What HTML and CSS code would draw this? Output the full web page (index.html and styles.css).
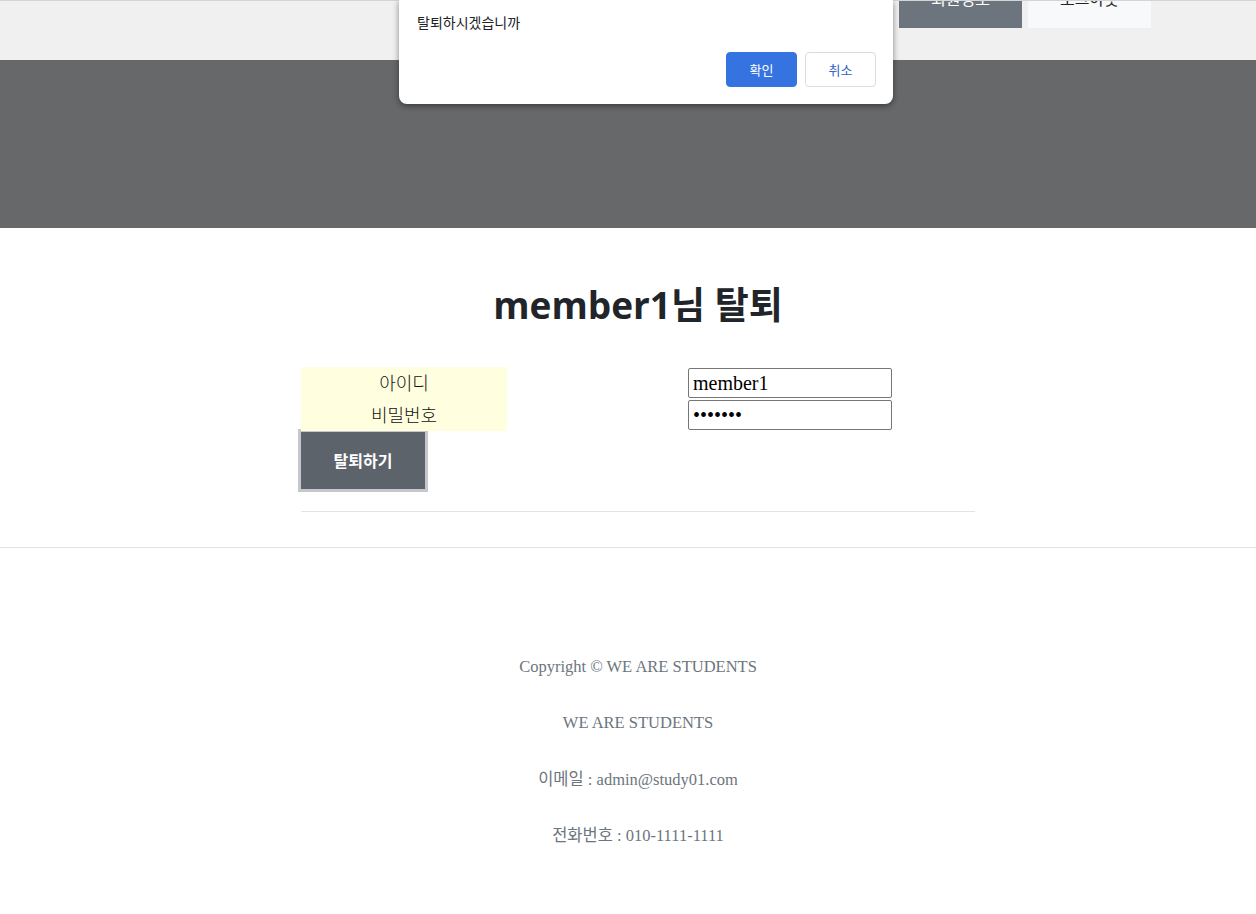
FILE: index.html
```html
<!DOCTYPE html>
<html lang="ko">
<head>
<meta charset="utf-8">
<title>회원 탈퇴</title>
<link rel="stylesheet" href="styles.css">
</head>
<body>
<header class="topbar">
  <nav class="nav">
    <a class="nav-btn nav-dark">회원정보</a>
    <a class="nav-btn nav-light">로그아웃</a>
  </nav>
</header>
<section class="hero"></section>
<main class="content">
  <h1 class="title">member1님 탈퇴</h1>
  <form class="form">
    <div class="grid">
      <div class="label">아이디</div>
      <div class="field"><input class="input" type="text" value="member1"></div>
      <div class="label">비밀번호</div>
      <div class="field"><input class="input" type="password" value="1234567"></div>
    </div>
    <button class="submit" type="button">탈퇴하기</button>
  </form>
  <hr class="rule">
</main>
<footer class="footer">
  <p>Copyright © WE ARE STUDENTS</p>
  <p>WE ARE STUDENTS</p>
  <p>이메일 : admin@study01.com</p>
  <p>전화번호 : 010-1111-1111</p>
</footer>
<div class="dialog">
  <div class="dialog-msg">탈퇴하시겠습니까</div>
  <div class="dialog-actions">
    <button class="dbtn dbtn-ok" type="button">확인</button>
    <button class="dbtn dbtn-cancel" type="button">취소</button>
  </div>
</div>
</body>
</html>
```
FILE: styles.css
```css
html, body { margin: 0; padding: 0; }
body {
  background: #fff;
  font-family: "Noto Sans CJK KR", "Noto Sans", sans-serif;
  color: #212529;
  overflow: hidden;
  position: relative;
  min-height: 914px;
}
.topbar {
  height: 59px;
  background: #f0f0f0;
  border-top: 1px solid #d4d4d4;
  overflow: hidden;
}
.nav {
  display: flex;
  justify-content: flex-end;
  gap: 6px;
  padding-right: 105px;
}
.nav-btn {
  width: 123px;
  height: 50px;
  margin-top: -23px;
  box-sizing: border-box;
  padding-top: 8px;
  text-align: center;
  font-size: 16px;
  line-height: 24px;
}
.nav-dark { background: #6c757d; color: #fff; }
.nav-light { background: #f8f9fa; color: #212529; }
.hero {
  height: 168px;
  background: #67686a;
}
.content {
  width: 674px;
  margin: 0 0 0 calc(50% - 327px);
  padding-top: 53px;
}
.title {
  margin: 0;
  text-align: center;
  font-family: "Open Sans", "Noto Sans CJK KR", sans-serif;
  font-weight: 700;
  font-size: 37px;
  line-height: 48px;
  color: #212529;
}
.form { margin-top: 38px; }
.grid {
  display: grid;
  grid-template-columns: 206px 1fr;
  grid-auto-rows: 32px;
}
.label {
  background: #ffffe0;
  text-align: center;
  font-size: 18px;
  line-height: 30px;
  color: #111;
  font-weight: 300;
}
.field { padding-left: 181px; }
.input {
  display: block;
  width: 204px;
  height: 30px;
  box-sizing: border-box;
  margin: 1px 0 0 0;
  border: 1px solid #767676;
  border-radius: 2px;
  padding: 0 4px;
  font-family: "Liberation Serif", serif;
  font-size: 20px;
  color: #000;
  background: #fff;
}
.submit {
  display: block;
  margin: -2px 0 0 -3px;
  width: 130px;
  height: 63px;
  border: 3px solid #c4c8cc;
  background: #5c636a;
  color: #fff;
  font-family: "Noto Sans CJK KR", sans-serif;
  font-weight: 700;
  font-size: 16px;
  line-height: 20px;
  padding: 0 0 2px 0;
}
.rule {
  margin: 19px 0 0 0;
  border: 0;
  border-top: 1px solid #e3e3e3;
  height: 0;
}
.footer {
  margin-top: 35px;
  border-top: 1px solid #e3e3e3;
  padding: 107px 0 0 20px;
  display: flex;
  flex-direction: column;
  align-items: center;
  gap: 32.4px;
  font-family: "Liberation Serif", "Noto Sans CJK KR", serif;
  font-size: 16.5px;
  color: #6c757d;
}
.footer p { margin: 0; line-height: 24px; }
.dialog {
  position: absolute;
  top: 0;
  left: 399px;
  width: 494px;
  height: 104px;
  box-sizing: border-box;
  background: #fff;
  border-radius: 0 0 8px 8px;
  box-shadow: 0 2px 6px rgba(0,0,0,0.45);
  padding: 12px 17px 0 18px;
}
.dialog-msg {
  font-size: 14px;
  line-height: 20px;
  color: #202124;
}
.dialog-actions {
  display: flex;
  justify-content: flex-end;
  gap: 8px;
  margin-top: 20px;
}
.dbtn {
  width: 71px;
  height: 35px;
  border-radius: 4px;
  font-family: "Noto Sans CJK KR", sans-serif;
  font-size: 13px;
}
.dbtn-ok { background: #3574e0; color: #fff; border: 1px solid #3574e0; }
.dbtn-cancel { background: #fff; color: #2f63c8; border: 1px solid #dadce0; }
```
